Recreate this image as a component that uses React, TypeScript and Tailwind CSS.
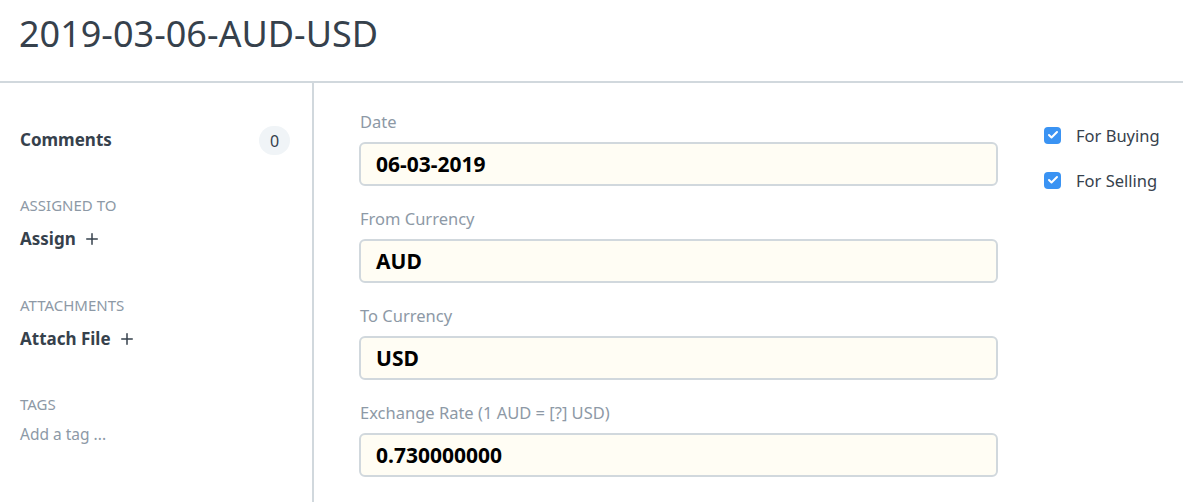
import { Check, Plus } from "lucide-react"

const fields = [
  { label: "Date", value: "06-03-2019" },
  { label: "From Currency", value: "AUD" },
  { label: "To Currency", value: "USD" },
  { label: "Exchange Rate (1 AUD = [?] USD)", value: "0.730000000" }
]

function CheckRow({ label }: { label: string }) {
  return (
    <div className="flex h-[24px] items-center gap-[15px]">
      <span className="flex h-[17px] w-[17px] items-center justify-center rounded-[4px] bg-[#3a93f3]">
        <Check className="h-[12px] w-[12px] text-white" strokeWidth={4} />
      </span>
      <span className="mt-[3px] text-[16.5px] text-[#36414c]">{label}</span>
    </div>
  )
}

export default function App() {
  return (
    <div className="h-[502px] w-[1183px] overflow-hidden bg-white font-['Noto_Sans',sans-serif] text-[#36414c]">
      {/* Title bar */}
      <div className="flex h-[83px] items-start border-b-2 border-[#d1d8dd] pl-[19px] pt-[9px]">
        <h1 className="text-[36px] leading-[50px] font-normal">
          2019-03-06-AUD-USD
        </h1>
      </div>

      <div className="flex h-[419px]">
        {/* Sidebar */}
        <aside className="w-[314px] shrink-0 border-r-2 border-[#d1d8dd] pl-[20px] pr-[22px] pt-[43px]">
          <div className="flex items-center justify-between">
            <span className="-mt-[2px] text-[17px] font-bold">Comments</span>
            <span className="flex h-[29px] w-[31px] items-center justify-center rounded-full bg-[#f0f4f7] text-[16px]">
              0
            </span>
          </div>

          <div className="mt-[40px] text-[15px] uppercase leading-[20px] text-[#8d99a6]">
            Assigned to
          </div>
          <div className="mt-[12px] flex items-center gap-[7px] text-[17px] font-bold leading-[24px]">
            Assign <Plus className="h-[18px] w-[18px]" strokeWidth={2} />
          </div>

          <div className="mt-[44px] text-[15px] uppercase leading-[20px] text-[#8d99a6]">
            Attachments
          </div>
          <div className="mt-[12px] flex items-center gap-[7px] text-[17px] font-bold leading-[24px]">
            Attach File <Plus className="h-[18px] w-[18px]" strokeWidth={2} />
          </div>

          <div className="mt-[43px] text-[15px] uppercase leading-[20px] text-[#8d99a6]">
            Tags
          </div>
          <div className="mt-[10px] text-[15.5px] leading-[20px] text-[#8d99a6]">
            Add a tag ...
          </div>
        </aside>

        {/* Form */}
        <main className="flex flex-1 gap-[46px] pl-[45px] pt-[27px]">
          <div className="flex w-[639px] flex-col gap-[21px]">
            {fields.map((f) => (
              <div key={f.label} className="flex flex-col gap-[8px]">
                <label className="pl-[1px] text-[16.5px] leading-[24px] text-[#8d99a6]">
                  {f.label}
                </label>
                <div className="flex h-[44px] items-center rounded-[6px] border-2 border-[#d1d8dd] bg-[#fffdf4] px-[15px] pt-[1px] text-[21px] font-bold text-black">
                  {f.value}
                </div>
              </div>
            ))}
          </div>

          <div className="flex flex-col gap-[21px] pt-[13px]">
            <CheckRow label="For Buying" />
            <CheckRow label="For Selling" />
          </div>
        </main>
      </div>
    </div>
  )
}
